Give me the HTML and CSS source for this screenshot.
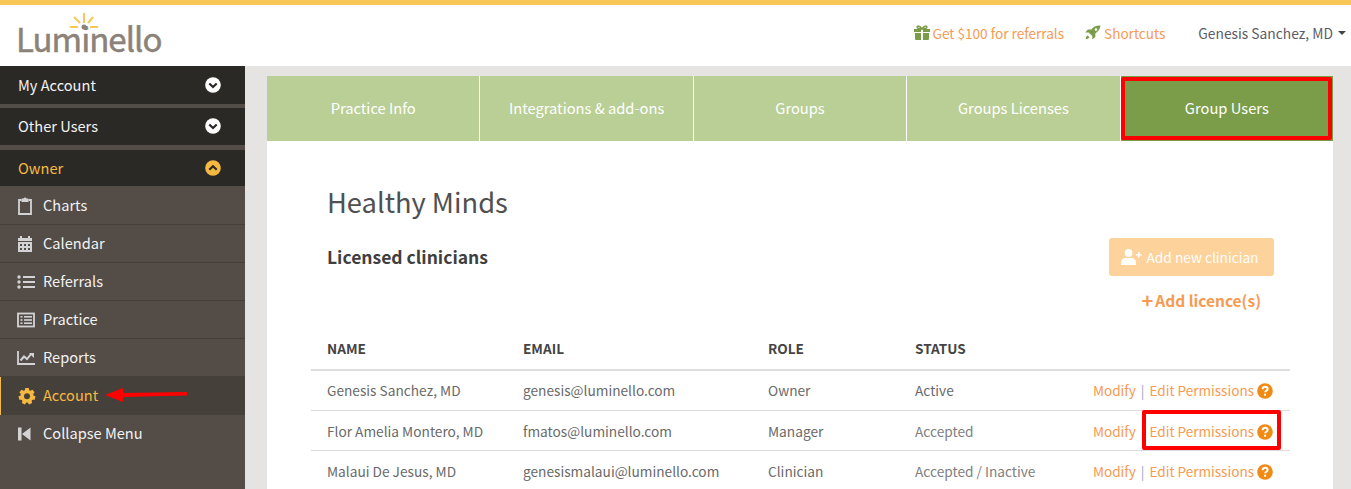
FILE: index.html
```html
<!DOCTYPE html>
<html lang="en">
<head>
<meta charset="utf-8">
<title>Luminello</title>
<link rel="stylesheet" href="styles.css">
</head>
<body>
<svg class="defs" width="0" height="0" aria-hidden="true">
  <symbol id="qmark" viewBox="0 0 16 16"><circle cx="8" cy="8" r="7.8" fill="currentColor"/><path d="M5.600 6.200c0-1.500 1.100-2.500 2.500-2.500s2.500 1 2.500 2.300c0 1.800-2.400 1.700-2.400 3.300" fill="none" stroke="#fff" stroke-width="2"/><rect x="7.100" y="10.700" width="2" height="2" fill="#fff"/></symbol>
  <symbol id="down" viewBox="0 0 16 16"><circle cx="8" cy="8" r="7.800" fill="currentColor"/><path d="M4.300 6.500 8 10l3.700-3.500" fill="none" stroke="#2b2926" stroke-width="2.200"/></symbol>
  <symbol id="up" viewBox="0 0 16 16"><circle cx="8" cy="8" r="7.800" fill="currentColor"/><path d="M4.300 9.800 8 6.300l3.700 3.500" fill="none" stroke="#2b2926" stroke-width="2.200"/></symbol>
</svg>
<header class="topbar">
  <a class="logo">
    <svg class="sun" width="30" height="18" viewBox="0 0 30 18"><g stroke="#f8c757" stroke-width="2" fill="none"><path d="M15 0v10M5 4l6 6M24 4l-5 6M1 14h8M21 14h8"/></g><circle cx="15" cy="14" r="2.500" fill="#8b8279"/></svg>
    <span>Luminello</span>
  </a>
  <nav class="topnav">
    <a class="toplink"><svg width="16" height="15" viewBox="0 0 16 15"><path fill="#7b9c48" d="M0 4h7v3H0zM9 4h7v3H9zM1 8h6v7H2a1 1 0 0 1-1-1zM9 8h6v6a1 1 0 0 1-1 1H9z"/><path fill="none" stroke="#7b9c48" stroke-width="1.600" d="M8 4C6 1 3.500.5 3.200 2S5 4 8 4c3 0 5.100-.5 4.800-2S10 1 8 4z"/></svg>Get $100 for referrals</a>
    <a class="toplink"><svg width="16" height="15" viewBox="0 0 16 15"><path fill="#7b9c48" d="M15.500.500C11.500.200 8.500 1.500 6.300 4.500H2.800L.300 7.500h3.400l3.600 3.600v3.400l3-2.500V8.600c3-2.200 5-5 5.200-8.100zM2.700 10.500c-1.300.6-1.900 2-2 3.700 1.700-.100 3.100-.700 3.700-2z"/><circle cx="11" cy="4.600" r="1.300" fill="#fff"/></svg>Shortcuts</a>
    <a class="user">Genesis Sanchez, MD<i class="caret"></i></a>
  </nav>
</header>
<div class="layout">
  <aside class="sidebar">
    <div class="group first">My Account<svg class="chev" width="16" height="16"><use href="#down"/></svg></div>
    <div class="group second">Other Users<svg class="chev" width="16" height="16"><use href="#down"/></svg></div>
    <div class="group owner">Owner<svg class="chev" width="16" height="16"><use href="#up"/></svg></div>
    <ul class="menu">
      <li class="item"><svg class="ico" width="16" height="18" viewBox="0 0 16 18"><path fill="none" stroke="currentColor" stroke-width="1.800" d="M4.500 3H2v14h12V3h-2.500"/><path fill="currentColor" d="M4.500 1.500h2a1.600 1.600 0 0 1 3 0h2V5h-7z"/></svg>Charts</li>
      <li class="item"><svg class="ico" width="16" height="18" viewBox="0 0 16 18"><path fill="currentColor" d="M1 3h2V1h2v2h6V1h2v2h2v3H1z"/><path fill="currentColor" fill-rule="evenodd" d="M1 7h14v10H1zM3 9v2h2V9zm4 0v2h2V9zm4 0v2h2V9zm-8 4v2h2v-2zm4 0v2h2v-2zm4 0v2h2v-2z"/></svg>Calendar</li>
      <li class="item"><svg class="ico" width="18" height="16" viewBox="0 0 18 16"><g fill="currentColor"><circle cx="2" cy="3" r="1.700"/><circle cx="2" cy="8" r="1.700"/><circle cx="2" cy="13" r="1.700"/><rect x="6" y="2" width="12" height="2"/><rect x="6" y="7" width="12" height="2"/><rect x="6" y="12" width="12" height="2"/></g></svg>Referrals</li>
      <li class="item"><svg class="ico" width="18" height="16" viewBox="0 0 18 16"><rect x="1" y="1.500" width="16" height="13" fill="none" stroke="currentColor" stroke-width="1.800"/><g fill="currentColor"><rect x="3.500" y="4" width="2" height="1.600"/><rect x="3.500" y="7.200" width="2" height="1.600"/><rect x="3.500" y="10.400" width="2" height="1.600"/><rect x="7" y="4" width="8" height="1.600"/><rect x="7" y="7.200" width="8" height="1.600"/><rect x="7" y="10.400" width="8" height="1.600"/></g></svg>Practice</li>
      <li class="item"><svg class="ico" width="18" height="16" viewBox="0 0 18 16"><path fill="none" stroke="currentColor" stroke-width="1.800" d="M1 1v13h17"/><path fill="none" stroke="currentColor" stroke-width="2" d="M3.500 10.500 7 6.500l3 2.500 4-5"/><path fill="currentColor" d="M12 3h5v5z"/></svg>Reports</li>
      <li class="item active"><svg class="ico" width="18" height="18" viewBox="0 0 18 18"><path fill="currentColor" fill-rule="evenodd" d="M7.300 1h3.400l.5 2.200 1.300.6 2-1.100 2.100 2.600-1.400 1.800.3 1.400 2 1-.8 3.300-2.200-.1-.9 1.100.5 2.200-3 1.400-1.400-1.800H8.300l-1.400 1.800-3-1.400.5-2.200-.9-1.100-2.200.1L.5 9.500l2-1 .3-1.400-1.400-1.800 2.100-2.600 2 1.100 1.300-.6zM9 6.200a3 3 0 1 0 0 6 3 3 0 0 0 0-6z"/></svg>Account</li>
      <li class="item plain"><svg class="ico" width="15" height="15" viewBox="0 0 15 15"><path fill="currentColor" d="M1 1h3.500v13H1zM13.500 1v13L5 7.500z"/></svg>Collapse Menu</li>
    </ul>
  </aside>
  <main class="panel">
    <div class="tabs">
      <a class="tab">Practice Info</a>
      <a class="tab">Integrations &amp; add-ons</a>
      <a class="tab">Groups</a>
      <a class="tab">Groups Licenses</a>
      <a class="tab current">Group Users</a>
    </div>
    <section class="content">
      <h1 class="title">Healthy Minds</h1>
      <div class="bar">
        <h2 class="subtitle">Licensed clinicians</h2>
        <div class="actions">
          <a class="btn"><svg width="21" height="16" viewBox="0 0 21 16"><g fill="#fff"><circle cx="7.500" cy="4" r="3.900"/><path d="M0 16v-2.500C0 10.500 2.500 9 4.500 9h6c2 0 4.500 1.500 4.500 4.500V16z"/><path d="M15 5h2V3h1.500v2h2v1.500h-2v2H17v-2h-2z"/></g></svg>Add new clinician</a>
          <a class="addlic"><span class="plus">+</span>Add licence(s)</a>
        </div>
      </div>
      <table class="users">
        <thead>
          <tr><th class="c1">NAME</th><th class="c2">EMAIL</th><th class="c3">ROLE</th><th class="c4">STATUS</th><th></th></tr>
        </thead>
        <tbody>
          <tr><td>Genesis Sanchez, MD</td><td>genesis@luminello.com</td><td>Owner</td><td>Active</td><td class="ops"><a>Modify</a><span class="sep">|</span><a>Edit Permissions</a><svg class="q" width="16" height="16"><use href="#qmark"/></svg></td></tr>
          <tr><td>Flor Amelia Montero, MD</td><td>fmatos@luminello.com</td><td>Manager</td><td class="muted">Accepted</td><td class="ops"><a>Modify</a><span class="sep">|</span><a>Edit Permissions</a><svg class="q" width="16" height="16"><use href="#qmark"/></svg></td></tr>
          <tr><td>Malaui De Jesus, MD</td><td>genesismalaui@luminello.com</td><td>Clinician</td><td class="muted">Accepted / Inactive</td><td class="ops"><a>Modify</a><span class="sep">|</span><a>Edit Permissions</a><svg class="q" width="16" height="16"><use href="#qmark"/></svg></td></tr>
        </tbody>
      </table>
    </section>
  </main>
</div>
<div class="mark mark-tab"></div>
<div class="mark mark-perm"></div>
<svg class="arrow" width="82" height="16" viewBox="0 0 82 16"><path fill="#f00" d="M0 8 18 1v5l63-1a1.500 1.500 0 0 1 0 3.500L18 10v5z"/></svg>
</body>
</html>
```
FILE: styles.css
```css
* { box-sizing: border-box; }
html, body { margin: 0; height: 489px; overflow: hidden; }
body {
  position: relative;
  background: #e5e4e2;
  font-family: "Noto Sans CJK SC", "Noto Sans", sans-serif;
  font-size: 14px;
  line-height: 20px;
  color: #6a6a6a;
}
.defs { position: absolute; }
a { color: inherit; text-decoration: none; }

.topbar {
  height: 66px;
  background: #fff;
  border-top: 5px solid #f8c757;
  display: flex;
  justify-content: space-between;
  align-items: center;
  padding: 0 5px 0 16px;
}
.logo { display: block; position: relative; color: #8b8279; font-size: 33px; line-height: 40px; letter-spacing: -1px; padding-top: 4px; -webkit-text-stroke: 0.5px #8b8279; }
.sun { position: absolute; left: 53px; top: -1px; }
.topnav { display: flex; align-items: center; margin-top: -6px; }
.toplink { color: #f79a52; font-size: 13.6px; display: flex; align-items: center; gap: 3px; margin-right: 21px; }
.user { color: #5b5b66; font-size: 13.8px; margin-left: 12px; display: flex; align-items: center; }
.caret { width: 0; height: 0; border: 4.5px solid transparent; border-top-color: #444; border-bottom: 0; margin-left: 5px; }

.layout { display: flex; height: 423px; }
.sidebar { width: 245px; flex: none; background: #534c47; color: #f2f2f2; font-size: 14.6px; }
.group {
  height: 38px;
  background: #2b2926;
  display: flex;
  justify-content: space-between;
  align-items: center;
  padding: 0 24px 0 18px;
  margin-bottom: 4px;
}
.group.second { height: 37px; margin-bottom: 5px; padding-bottom: 1px; }
.group.owner { color: #f5b942; height: 36px; margin-bottom: 0; padding-bottom: 1px; }
.chev { color: #fff; }
.owner .chev { color: #f5b942; }
.menu { list-style: none; margin: 0; padding: 1px 0 0; }
.item {
  height: 38px;
  display: flex;
  align-items: center;
  padding: 0 0 1px 43px;
  border-bottom: 1px solid #45413a;
  position: relative;
}
.ico { color: #d3d3d6; position: absolute; left: 17px; top: 50%; transform: translateY(-50%); }
.item.active { background: #45403a; color: #f5b942; border-left: 1px solid #f5b942; border-bottom: 0; padding: 0 0 2px 42px; }
.item.active .ico { color: #f5b942; left: 17px; }
.item.plain { border-bottom: 0; padding-bottom: 2px; }

.panel { width: 1066px; margin: 10px 0 0 22px; background: #fff; }
.tabs { display: flex; height: 65px; }
.tab {
  flex: 1 1 0;
  background: #b9cf95;
  color: #fff;
  font-size: 14.7px;
  display: flex;
  align-items: center;
  justify-content: center;
  border-right: 1px solid #fff;
  padding-bottom: 1px;
}
.tab.current { background: #7b9c48; border-right: 0; }

.content { padding: 0 43px 0 44px; }
.title { margin: 0; font-size: 27.3px; line-height: 40px; font-weight: 400; color: #505050; padding: 40px 0 0 16px; }
.bar { display: flex; justify-content: space-between; padding: 17px 16px 0 16px; height: 109px; }
.subtitle { margin: 0; font-size: 17.5px; line-height: 24px; font-weight: 700; color: #3f3f3f; padding-top: 7px; }
.actions { display: flex; flex-direction: column; align-items: flex-end; }
.btn {
  width: 165px;
  height: 38px;
  background: #fdd29b;
  color: #fff;
  border-radius: 3px;
  font-size: 13.7px;
  display: flex;
  align-items: center;
  justify-content: center;
  gap: 5px;
  padding-right: 4px;
}
.addlic { color: #f79a52; font-weight: 700; font-size: 15.5px; line-height: 24px; margin: 12px 13px 0 0; display: flex; align-items: center; }
.plus { margin-right: 2px; font-size: 20px; }

.users { width: 979px; border-collapse: collapse; table-layout: fixed; font-size: 13.7px; }
.users th { text-align: left; color: #444; font-weight: 700; font-size: 13.6px; height: 40px; padding: 0 0 4px 16px; border-bottom: 2px solid #ddd; }
.users td { height: 40px; padding: 1px 0 0 16px; border-bottom: 1px solid #ddd; white-space: nowrap; }
.users tbody tr:first-child td { padding-top: 0; }
.c1 { width: 196px; }
.c2 { width: 245px; }
.c3 { width: 147px; }
.c4 { width: 172px; }
.users td.muted { color: #808080; }
.users td.ops { padding-right: 17px; padding-left: 0; text-align: right; color: #f79a52; font-size: 13.55px; }
.sep { color: #9aa6c8; margin: 0 5px; }
.q { color: #f08a12; vertical-align: -3px; margin-left: 3px; }

.mark { position: absolute; border: 4px solid #f00; border-radius: 2px; }
.mark-tab { left: 1121px; top: 77px; width: 211px; height: 63px; }
.mark-perm { left: 1142px; top: 410px; width: 139px; height: 40px; }
.arrow { position: absolute; left: 105px; top: 387px; }
```
